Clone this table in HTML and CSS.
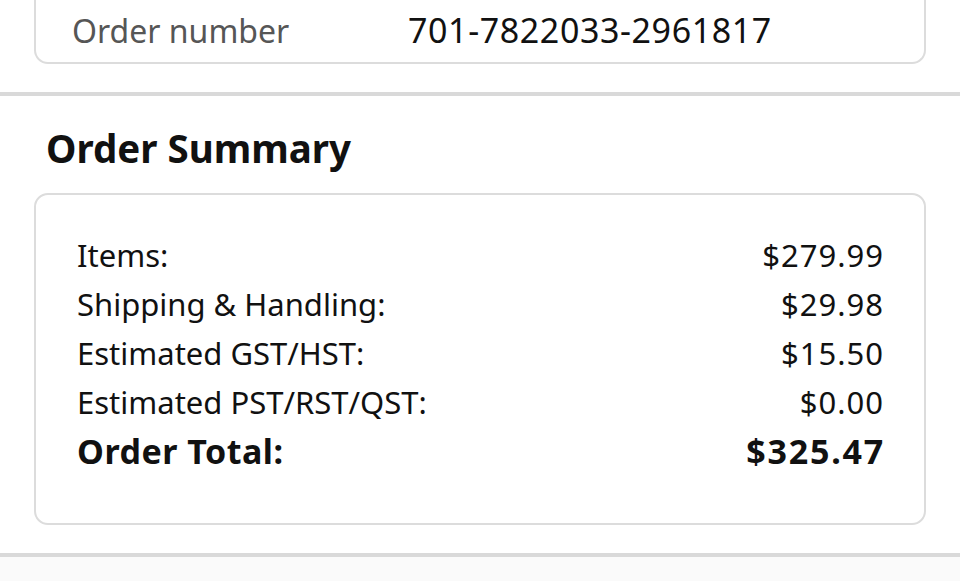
FILE: index.html
```html
<!DOCTYPE html>
<html>
<head>
<meta charset="utf-8">
<link rel="stylesheet" href="styles.css">
</head>
<body>
<section class="top-section">
  <div class="info-card">
    <div class="info-row">
      <span class="info-label">Order number</span>
      <span class="info-value">701-7822033-2961817</span>
    </div>
  </div>
</section>
<div class="divider"></div>
<section class="summary-section">
  <h2 class="summary-title">Order Summary</h2>
  <div class="summary-card">
    <div class="line"><span>Items:</span><span class="amt">$279.99</span></div>
    <div class="line"><span>Shipping &amp; Handling:</span><span class="amt">$29.98</span></div>
    <div class="line"><span>Estimated GST/HST:</span><span class="amt">$15.50</span></div>
    <div class="line"><span>Estimated PST/RST/QST:</span><span class="amt">$0.00</span></div>
    <div class="line total"><span>Order Total:</span><span class="amt">$325.47</span></div>
  </div>
</section>
<div class="divider"></div>
<div class="after"></div>
</body>
</html>
```
FILE: styles.css
```css
html, body {
  margin: 0;
  padding: 0;
  background: #ffffff;
  font-family: "Noto Sans", "Open Sans", sans-serif;
  color: #111111;
  overflow: hidden;
}
.top-section {
  padding: 0 34px 28px 34px;
}
.info-card {
  border: 2px solid #dcdcdc;
  border-top: none;
  border-radius: 0 0 14px 14px;
  height: 64px;
  box-sizing: border-box;
  padding: 0 0 0 36px;
}
.info-row {
  display: grid;
  grid-template-columns: 336px 1fr;
  align-items: baseline;
  height: 100%;
  line-height: 60px;
}
.info-label {
  color: #565656;
  font-size: 32px;
}
.info-value {
  color: #111111;
  font-size: 34px;
  letter-spacing: 0.6px;
}
.divider {
  height: 4px;
  background: #d9d9d9;
}
.summary-section {
  padding: 22px 34px 28px 34px;
}
.summary-title {
  margin: 0 0 0 12px;
  font-size: 38.5px;
  font-weight: 700;
  line-height: 60px;
  color: #111111;
}
.summary-card {
  margin-top: 15px;
  border: 2px solid #dcdcdc;
  border-radius: 14px;
  padding: 36px 41px 45px 41px;
  height: 332px;
  box-sizing: border-box;
}
.line {
  display: flex;
  justify-content: space-between;
  font-size: 31px;
  line-height: 49px;
}
.amt {
  letter-spacing: 1px;
  margin-right: -1px;
}
.line.total {
  font-weight: 700;
  font-size: 34px;
  letter-spacing: 0.5px;
}
.line.total .amt {
  letter-spacing: 1.8px;
  margin-right: -2px;
}
.after {
  height: 40px;
  background: #fafafa;
}
```
